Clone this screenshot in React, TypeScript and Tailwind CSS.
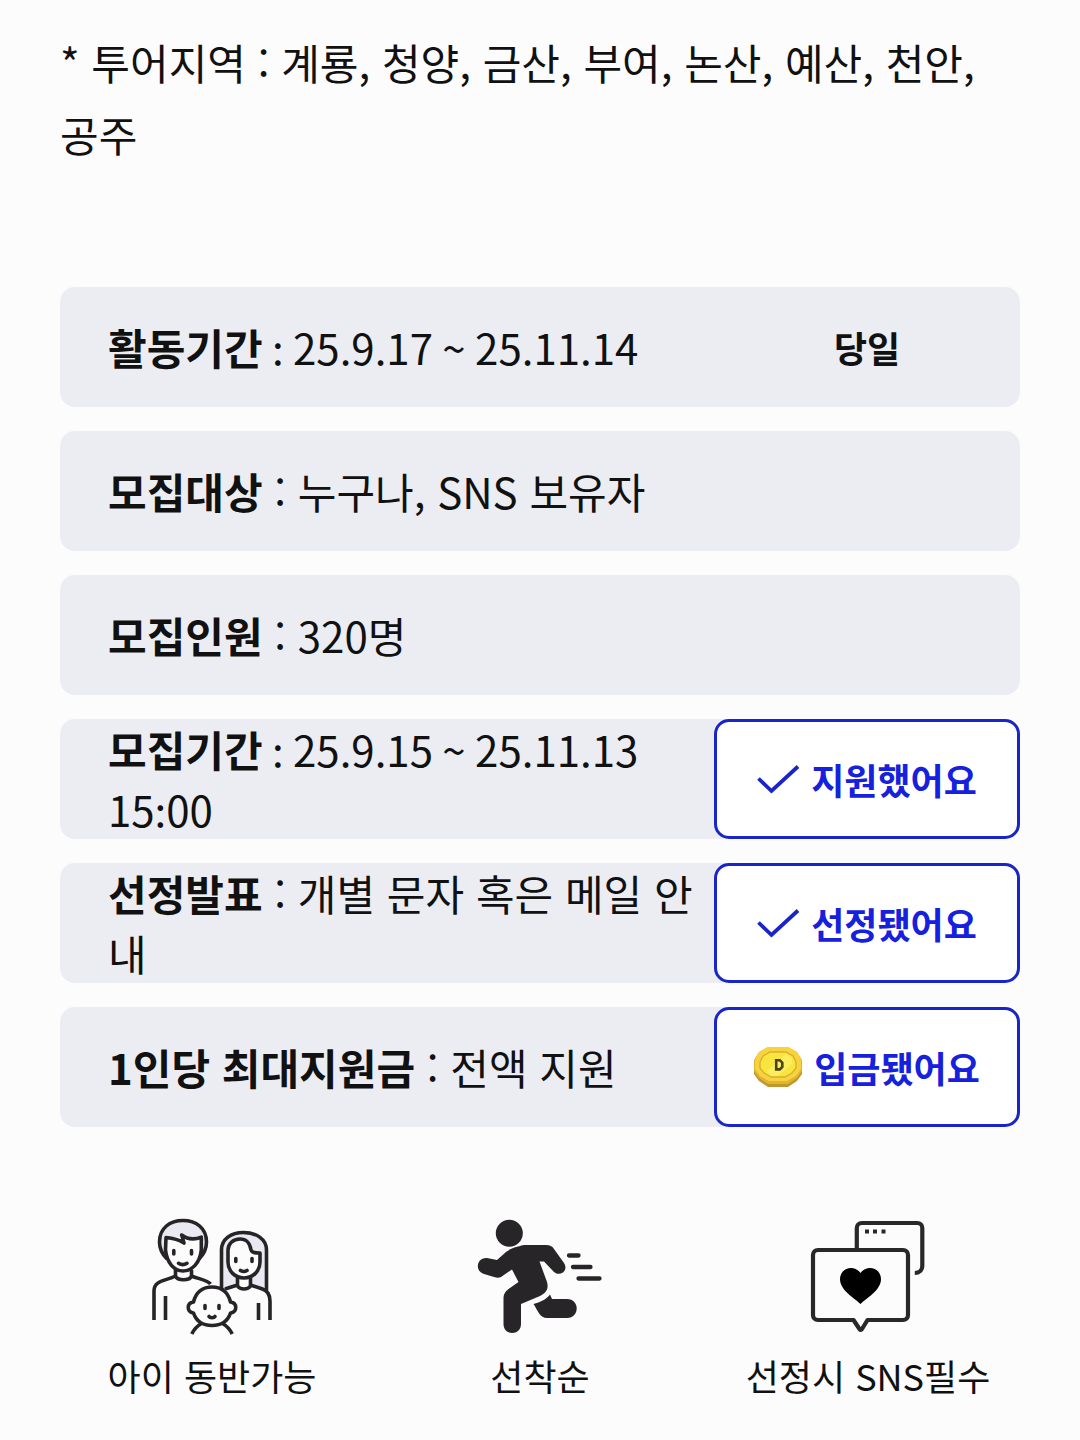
import type { ReactNode } from "react";

function Check() {
  return (
    <svg width="44" height="48" viewBox="0 0 44 48" fill="none" className="shrink-0">
      <path d="M1.500 23.500 14.500 36 41 11.500" stroke="#1a25c8" strokeWidth="3.8" />
    </svg>
  );
}

function Coin() {
  return (
    <svg width="50" height="42" viewBox="0 0 50 42" className="shrink-0">
      <path d="M14 4h20l9 4 5 8v12l-5 7-9 6H14l-9-6-5-7V16l5-8z" fill="#c2962f" />
      <path d="M14 1h20l9 5 5 8v11l-5 7-9 6H14l-9-6-5-7V14l5-8z" fill="#e0b535" />
      <path d="M14 1h20l9 5 4 8v9l-5 7-9 5H15l-9-5-5-7v-9l4-8z" fill="#f8d33c" />
      <path d="M16 6h16l7 4 3 6v6l-4 5-7 4H17l-7-4-4-5v-6l3-6z" fill="#f9e53e" stroke="#d5ae35" strokeWidth="1.300" />
      <path d="m13 25 19-17 6 4v6L24 30h-7z" fill="#fcf274" opacity=".6" />
      <path d="M22.200 14.200h3.600l2.500 2.500v4.200l-2.500 2.500h-3.600z" fill="none" stroke="#494216" strokeWidth="2.600" />
    </svg>
  );
}

function Family() {
  return (
    <svg width="160" height="150" viewBox="2 0 160 150" fill="none" stroke="#262426" strokeWidth="3.6" strokeLinejoin="round">
      <path d="M91.500 90V50C91.500 39 101 32.500 113.500 32.500S136.500 39 136.500 50V90Z" fill="#e9e9f2" />
      <path d="M107 75h13v10l16 5v20H94V89l13-4Z" fill="#fcfcfc" stroke="none" />
      <path d="M24 120V91C24 80 36 81 45.500 76V70M61.500 70v6c7 3 16 4 19 8M35.500 96v24M45.500 76c2 5 14 5 16 0" />
      <path d="M34.500 55C27 48 28 38 33 31 38 18 66 15 74 31c4 8 4 18-2.500 25V37H35Z" fill="#e9e9f2" stroke="none" />
      <path d="M36 37.500c6 .5 12 1.500 18 5.500l-2.300-8C57 39 64 40 71.300 37.200V50C70 63 62 71 53 71S37 63 35.500 50Z" fill="#fcfcfc" />
      <path d="M37 59C32 54 29.500 47 29.500 42 29.500 28 40 20.500 53 20.500S76.500 28 76.500 42C76.500 47 74 54 69 59" />
      <path d="M43.800 50.500v3.500M61.500 50.500v3.500M48.500 63.300c2.500 1.600 6 1.600 8.500 0" strokeLinecap="round" />
      <path d="M98 50c0-6 5-11 12-11 8 0 10 5 11 11 1 3 4 3 9 3v9c0 9-7 16-16 16s-16-7-16-16Z" fill="#fcfcfc" />
      <path d="M107.500 78v8c3 4 10 4 13 0v-8M95 89l12.500-4M120.500 85l12 4c6 2 7.500 6 7.500 12v19" />
      <path d="M128.500 103v17" />
      <path d="M105.800 58.500v3M122 58.500v3M110.500 70.500c2 1.200 4.500 1.200 6.500 0" strokeLinecap="round" />
      <path d="M61.800 134C64 129.500 67 126 71.500 123.500M92.500 123.500C97 126 100 129.500 102.200 134" />
      <path d="M63.500 102C66 92 73 87 82 87s16 5 18.500 15c7 1 7 10 0 11-3 9-10 12.500-18.500 12.500s-15.500-3.500-18.500-12.500c-7-1-7-10 0-11Z" fill="#fcfcfc" />
      <path d="M75 105.500v3M89 105.500v3M79 116.500c1 1.700 5 1.700 6 0" strokeLinecap="round" />
    </svg>
  );
}

function Runner() {
  return (
    <svg width="160" height="150" viewBox="0 0 160 150" fill="#272527">
      <circle cx="49.300" cy="33.300" r="13.500" />
      <path d="M64 45H86c4 0 6 1 8 4l10 14c5 8-4 14-10 9L84 61.500h-4.500L87 82c2 7-1 11-7 14l-19 8v20c0 12-17.500 12-17.500 0V99c0-4 1-7 5-10l10-7L52 69.500 41 77c-2 1-4 1-7 0l-10-3C14 71 17 57 27 58l10 2 9-8c5-4 10-5 18-7Z" />
      <path d="M73.500 104c7-2 12-4 16.500-9.500l2 4.500h15c13 0 13 19 0 19H87c-7 0-9-7-13.500-14Z" />
      <path d="M109 55.500h9.500M113 67h17.500M118.500 78.500h21" fill="none" stroke="#272527" strokeWidth="4.300" strokeLinecap="round" />
    </svg>
  );
}

function Bubbles() {
  return (
    <svg width="150" height="150" viewBox="-2 0 150 150" fill="none">
      <path d="M61.800 49V28c0-3 2-5 5-5h55.500c3 0 5 2 5 5v38c0 4-3 7-7.500 7" stroke="#292829" strokeWidth="4.2" />
      <path d="M70 29.500h4v4h-4zM78 29.500h4v4h-4zM86.500 29.500h4v4h-4z" fill="#292829" />
      <path d="M23 50h85c3 0 5 2 5 5v60c0 3-2 5-5 5H72.500l-5.500 9q-1.200 2-2.500 0L58.500 120H23c-3 0-5-2-5-5V55c0-3 2-5 5-5Z" stroke="#292829" strokeWidth="4.2" fill="#fcfcfc" strokeLinejoin="round" />
      <path d="M65.500 104C58 97 45 90 45 79c0-11 14-15 20.500-6C72 64 86 68 86 79c0 11-13 18-20.500 25Z" fill="#000" />
    </svg>
  );
}

function Row({ label, children, action }: { label: string; children: ReactNode; action?: ReactNode }) {
  return (
    <div className="flex h-[120px] items-center rounded-[15px] bg-[#ecedf3]">
      <div className="min-w-0 flex-1 pl-12 text-[42px] leading-[60px]">
        <b className="font-bold">{label}</b>
        {children}
      </div>
      {action}
    </div>
  );
}

function Status({ icon, children }: { icon: ReactNode; children: ReactNode }) {
  return (
    <button className="flex h-[120px] w-[306px] shrink-0 items-center justify-center gap-[10px] rounded-[15px] border-[3px] border-[#1925ca] bg-white text-[36px] font-bold text-[#1521dc]">
      {icon}
      <span>{children}</span>
    </button>
  );
}

function Feature({ icon, label }: { icon: ReactNode; label: string }) {
  return (
    <div className="flex flex-col items-center text-[36px]">
      {icon}
      <span className="-mt-0.5 whitespace-nowrap leading-[54px]">{label}</span>
    </div>
  );
}

export default function App() {
  return (
    <main lang="ko" className="h-[1440px] w-[1080px] overflow-hidden bg-[#fcfcfc] px-[60px] pt-[26px] font-['Noto_Sans_CJK_KR',sans-serif] text-[#111]">
      <p className="h-[261px] text-[42px] leading-[72px]">* 투어지역 : 계룡, 청양, 금산, 부여, 논산, 예산, 천안, 공주</p>
      <section className="flex flex-col gap-6">
        <Row label="활동기간" action={<b className="w-[306px] text-center text-[36px] font-bold">당일</b>}>
          <span lang="en"> : 25.9.17 ~ 25.11.14</span>
        </Row>
        <Row label="모집대상"> : 누구나, SNS 보유자</Row>
        <Row label="모집인원"> : 320명</Row>
        <Row label="모집기간" action={<Status icon={<Check />}>지원했어요</Status>}>
          <span lang="en"> : 25.9.15 ~ 25.11.13<br />15:00</span>
        </Row>
        <Row label="선정발표" action={<Status icon={<Check />}>선정됐어요</Status>}> : 개별 문자 혹은 메일 안내</Row>
        <Row label="1인당 최대지원금" action={<Status icon={<Coin />}>입금됐어요</Status>}> : 전액 지원</Row>
      </section>
      <section className="-mx-3 mt-[73px] grid grid-cols-3">
        <Feature icon={<Family />} label="아이 동반가능" />
        <Feature icon={<Runner />} label="선착순" />
        <Feature icon={<Bubbles />} label="선정시 SNS필수" />
      </section>
    </main>
  );
}
